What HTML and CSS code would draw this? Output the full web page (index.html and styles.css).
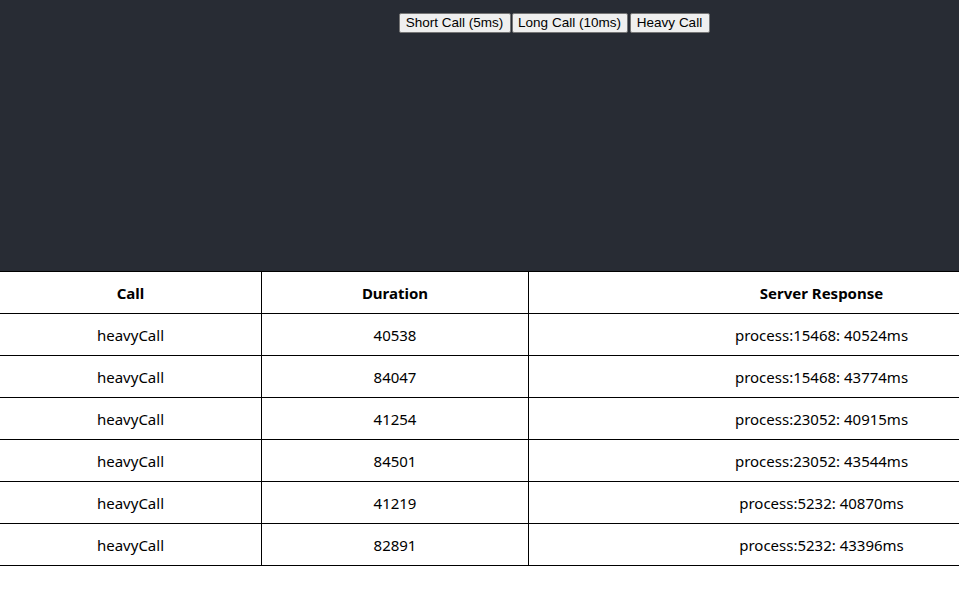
FILE: index.html
```html
<!DOCTYPE html>
<html>
<head>
<meta charset="utf-8">
<link rel="stylesheet" href="styles.css">
</head>
<body>
<div class="viewport">
<div class="page">
  <header class="app-header">
    <div class="buttons">
      <button class="btn btn-short">Short Call (5ms)</button><button class="btn btn-long">Long Call (10ms)</button><button class="btn btn-heavy">Heavy Call</button>
    </div>
  </header>
  <table class="calls">
    <colgroup>
      <col class="c1"><col class="c2"><col class="c3">
    </colgroup>
    <thead>
      <tr><th>Call</th><th>Duration</th><th>Server Response</th></tr>
    </thead>
    <tbody>
      <tr><td>heavyCall</td><td>40538</td><td>process:15468: 40524ms</td></tr>
      <tr><td>heavyCall</td><td>84047</td><td>process:15468: 43774ms</td></tr>
      <tr><td>heavyCall</td><td>41254</td><td>process:23052: 40915ms</td></tr>
      <tr><td>heavyCall</td><td>84501</td><td>process:23052: 43544ms</td></tr>
      <tr><td>heavyCall</td><td>41219</td><td>process:5232: 40870ms</td></tr>
      <tr><td>heavyCall</td><td>82891</td><td>process:5232: 43396ms</td></tr>
    </tbody>
  </table>
</div>
</div>
</body>
</html>
```

FILE: styles.css
```css
html, body {
  margin: 0;
  padding: 0;
  overflow: hidden;
  background: #ffffff;
}
.viewport {
  width: 959px;
  overflow: hidden;
}
.page {
  width: 1114px;
  font-family: "Noto Sans", "Open Sans", sans-serif;
}
.app-header {
  height: 271px;
  background: #282c34;
  box-sizing: border-box;
  padding-top: 13px;
  padding-right: 6px;
  text-align: center;
}
.buttons {
  display: flex;
  justify-content: center;
  gap: 1px;
}
.btn {
  font-family: "Liberation Sans", Arial, sans-serif;
  font-size: 13.5px;
  height: 20px;
  box-sizing: border-box;
  padding: 1px 4px;
  margin: 0;
  background: #efefef;
  color: #000;
  border: 1px solid #767676;
  border-radius: 2px;
  line-height: 16px;
}
.btn-short { width: 112px; }
.btn-long { width: 116px; margin-right: 1px; }
.btn-heavy { width: 80px; }
.calls {
  border-collapse: collapse;
  width: 1114px;
  table-layout: fixed;
  margin-left: -1px;
}
.c1 { width: 262px; }
.c2 { width: 267px; }
.c3 { width: 586px; }
.calls th, .calls td {
  border: 1px solid #000;
  height: 42px;
  padding: 0;
  text-align: center;
  font-size: 15px;
  color: #000;
  box-sizing: border-box;
}
.calls th {
  font-weight: bold;
}
```
